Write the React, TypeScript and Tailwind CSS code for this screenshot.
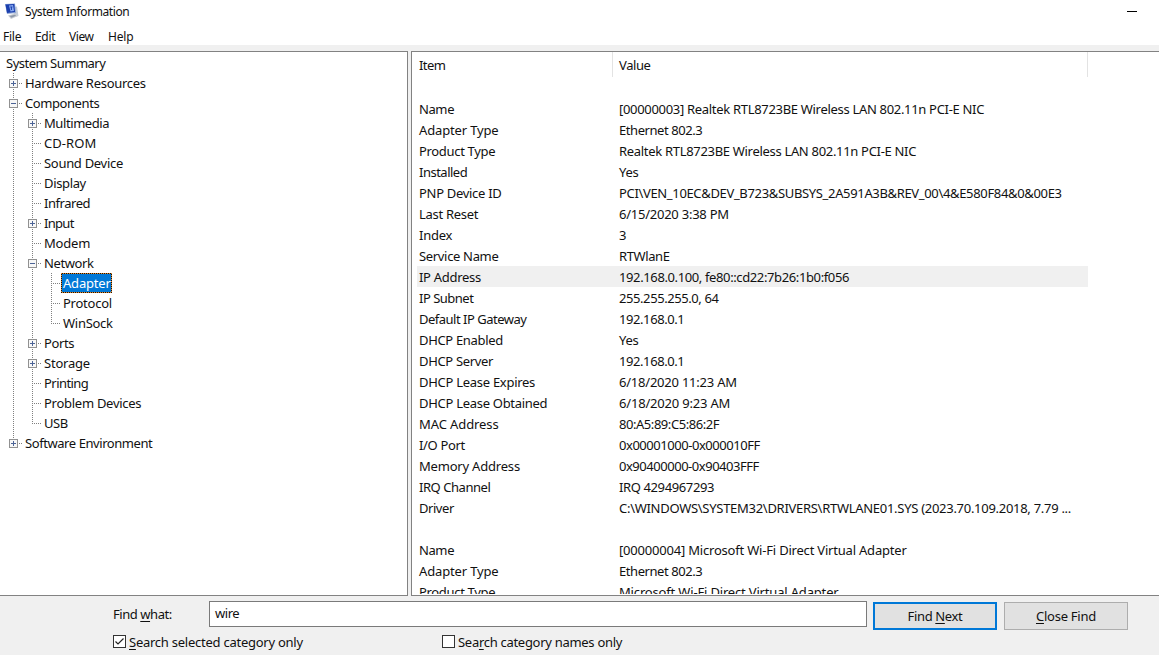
import React from "react";

type Toggle = "plus" | "minus" | "none";
type Guide = "through" | "last";

interface TreeNode {
  label: string;
  guides: Guide[];
  toggle: Toggle;
  track: string;
  selected?: boolean;
}

const T: Guide = "through";
const L: Guide = "last";

const nodes: TreeNode[] = [
  { label: "Hardware Resources", guides: [T], toggle: "plus", track: "tracking-[-0.28px]" },
  { label: "Components", guides: [T], toggle: "minus", track: "tracking-[-0.42px]" },
  { label: "Multimedia", guides: [T, T], toggle: "plus", track: "tracking-[-0.42px]" },
  { label: "CD-ROM", guides: [T, T], toggle: "none", track: "tracking-[0.05px]" },
  { label: "Sound Device", guides: [T, T], toggle: "none", track: "tracking-[-0.3px]" },
  { label: "Display", guides: [T, T], toggle: "none", track: "tracking-[-0.35px]" },
  { label: "Infrared", guides: [T, T], toggle: "none", track: "tracking-[-0.45px]" },
  { label: "Input", guides: [T, T], toggle: "plus", track: "tracking-[-0.7px]" },
  { label: "Modem", guides: [T, T], toggle: "none", track: "tracking-[-0.2px]" },
  { label: "Network", guides: [T, T], toggle: "minus", track: "tracking-[-0.4px]" },
  { label: "Adapter", guides: [T, T, T], toggle: "none", track: "tracking-[-0.2px]", selected: true },
  { label: "Protocol", guides: [T, T, T], toggle: "none", track: "tracking-[-0.25px]" },
  { label: "WinSock", guides: [T, T, L], toggle: "none", track: "tracking-[-0.28px]" },
  { label: "Ports", guides: [T, T], toggle: "plus", track: "tracking-[-0.4px]" },
  { label: "Storage", guides: [T, T], toggle: "plus", track: "tracking-[-0.22px]" },
  { label: "Printing", guides: [T, T], toggle: "none", track: "tracking-[-0.55px]" },
  { label: "Problem Devices", guides: [T, T], toggle: "none", track: "tracking-[-0.27px]" },
  { label: "USB", guides: [T, L], toggle: "none", track: "tracking-[-0.5px]" },
  { label: "Software Environment", guides: [L], toggle: "plus", track: "tracking-[-0.43px]" },
];

interface Row {
  item: string;
  itemTrack: string;
  value: string;
  valueTrack: string;
}

const row = (item: string, itemTrack: string, value: string, valueTrack: string): Row => ({
  item,
  itemTrack,
  value,
  valueTrack,
});

const rows: Row[] = [
  row("", "", "", ""),
  row("Name", "tracking-[-0.4px]", "[00000003] Realtek RTL8723BE Wireless LAN 802.11n PCI-E NIC", "tracking-[-0.31px]"),
  row("Adapter Type", "tracking-[-0.15px]", "Ethernet 802.3", "tracking-[-0.43px]"),
  row("Product Type", "tracking-[-0.33px]", "Realtek RTL8723BE Wireless LAN 802.11n PCI-E NIC", "tracking-[-0.31px]"),
  row("Installed", "tracking-[-0.5px]", "Yes", "tracking-[-0.3px]"),
  row("PNP Device ID", "tracking-[-0.3px]", "PCI\\VEN_10EC&DEV_B723&SUBSYS_2A591A3B&REV_00\\4&E580F84&0&00E3", "tracking-[-0.34px]"),
  row("Last Reset", "tracking-[-0.3px]", "6/15/2020 3:38 PM", "tracking-[-0.24px]"),
  row("Index", "tracking-[-0.25px]", "3", "tracking-normal"),
  row("Service Name", "tracking-[-0.33px]", "RTWlanE", "tracking-[-0.4px]"),
  row("IP Address", "tracking-[-0.3px]", "192.168.0.100, fe80::cd22:7b26:1b0:f056", "tracking-[-0.38px]"),
  row("IP Subnet", "tracking-[-0.5px]", "255.255.255.0, 64", "tracking-[-0.42px]"),
  row("Default IP Gateway", "tracking-[-0.5px]", "192.168.0.1", "tracking-[-0.42px]"),
  row("DHCP Enabled", "tracking-[-0.33px]", "Yes", "tracking-[-0.3px]"),
  row("DHCP Server", "tracking-[-0.33px]", "192.168.0.1", "tracking-[-0.42px]"),
  row("DHCP Lease Expires", "tracking-[-0.28px]", "6/18/2020 11:23 AM", "tracking-[-0.22px]"),
  row("DHCP Lease Obtained", "tracking-[-0.29px]", "6/18/2020 9:23 AM", "tracking-[-0.19px]"),
  row("MAC Address", "tracking-[-0.1px]", "80:A5:89:C5:86:2F", "tracking-[-0.45px]"),
  row("I/O Port", "tracking-[-0.35px]", "0x00001000-0x000010FF", "tracking-[-0.46px]"),
  row("Memory Address", "tracking-[-0.2px]", "0x90400000-0x90403FFF", "tracking-[-0.47px]"),
  row("IRQ Channel", "tracking-[-0.45px]", "IRQ 4294967293", "tracking-[-0.38px]"),
  row("Driver", "tracking-[-0.45px]", "C:\\WINDOWS\\SYSTEM32\\DRIVERS\\RTWLANE01.SYS (2023.70.109.2018, 7.79 ...", "tracking-[-0.285px]"),
  row("", "", "", ""),
  row("Name", "tracking-[-0.4px]", "[00000004] Microsoft Wi-Fi Direct Virtual Adapter", "tracking-[-0.2px]"),
  row("Adapter Type", "tracking-[-0.15px]", "Ethernet 802.3", "tracking-[-0.43px]"),
  row("Product Type", "tracking-[-0.33px]", "Microsoft Wi-Fi Direct Virtual Adapter", "tracking-[-0.17px]"),
];

function GuideCell({ guide, branch, toggle }: { guide: Guide; branch: boolean; toggle: Toggle }) {
  return (
    <svg width="19" height="20" viewBox="0 0 19 20" className="shrink-0" shapeRendering="crispEdges">
      <path d={guide === "last" ? "M9.5 0V11" : "M9.5 0V20"} stroke="#808080" strokeDasharray="1 1" />
      {branch && <path d="M9 10.5H19" stroke="#808080" strokeDasharray="1 1" />}
      {toggle !== "none" && (
        <>
          <rect x="5.5" y="6.5" width="8" height="8" fill="#f7f7f7" stroke="#919191" />
          <path d="M7 10.5H12" stroke="#4b6396" />
          {toggle === "plus" && <path d="M9.5 8V13" stroke="#4b6396" />}
        </>
      )}
    </svg>
  );
}

function TreeRow({ node }: { node: TreeNode }) {
  const end = node.guides.length - 1;
  return (
    <div className="flex h-5">
      {node.guides.map((g, i) => (
        <GuideCell key={i} guide={g} branch={i === end} toggle={i === end ? node.toggle : "none"} />
      ))}
      {node.selected ? (
        <span className="h-5 w-[51px] bg-[repeating-conic-gradient(#1c1208_0_25%,#e08a30_0_50%)] bg-size-[2px_2px] p-px">
          <span className={`block h-[18px] bg-[#0078d7] pl-px leading-[18px] text-white ${node.track}`}>
            {node.label}
          </span>
        </span>
      ) : (
        <span className={`pl-0.5 ${node.track}`}>{node.label}</span>
      )}
    </div>
  );
}

function AppIcon() {
  return (
    <svg width="16" height="17" viewBox="0 0 16 17" className="mt-px">
      <path d="M9 4L13 3.5L14.5 13L10 14Z" fill="#c3ccd8" />
      <path d="M1 1L11 .5L12 10L3 11Z" fill="#8ea6d6" />
      <path d="M1.5 1.5L10.3 1L11 9L3 10Z" fill="#1b3fae" />
      <path d="M5 2.5L9 2L10 8L6.5 8.5Z" fill="#88a9ef" />
      <path d="M6.3 4H8.4M7.4 4V7" stroke="#1b3fae" />
      <path d="M4 12.5L11 10.5L14 13L7 16Z" fill="#c9cdd3" />
      <path d="M5.5 13L11 11.7L12 12.7L7.5 14.8Z" fill="#8e99a9" />
    </svg>
  );
}

export default function App() {
  return (
    <div className="flex h-[655px] w-[1159px] flex-col overflow-hidden bg-[#f0f0f0] font-['Noto_Sans',sans-serif] text-[13px] leading-5 whitespace-pre text-[#111]">
      <header className="flex h-[25px] shrink-0 items-start justify-between bg-white pt-0.5 pr-[22px] pl-1 text-xs leading-5">
        <div className="flex gap-[5px]">
          <AppIcon />
          <span className="tracking-[-0.42px]">System Information</span>
        </div>
        <div className="mt-[9px] h-px w-2.5 bg-black" />
      </header>
      <nav className="flex h-5 shrink-0 bg-white pt-0.5 pl-[3px] text-xs leading-5">
        <span className="w-8 tracking-[-0.25px]">File</span>
        <span className="w-[34px] tracking-[-0.3px]">Edit</span>
        <span className="w-[39px] tracking-[-0.4px]">View</span>
        <span className="tracking-[-0.2px]">Help</span>
      </nav>
      <main className="mt-1.5 flex h-[545px] shrink-0 gap-[3px]">
        <section className="w-[408px] shrink-0 border-y border-r border-[#828282] bg-white pt-px pl-1">
          <div className="h-5 pl-0.5 tracking-[-0.5px]">System Summary</div>
          {nodes.map((n) => (
            <TreeRow key={n.label} node={n} />
          ))}
        </section>
        <section className="min-w-0 flex-1 border-y border-l border-[#828282] bg-white pl-[5px]">
          <div className="h-[542px] overflow-hidden">
            <div className="flex h-[25px] w-[671px] border-r border-[#e3e3e3] pl-0.5 leading-[27px]">
              <div className="w-[194px] border-r border-[#e3e3e3] tracking-[-0.6px]">Item</div>
              <div className="pl-1.5 tracking-[-0.4px]">Value</div>
            </div>
            {rows.map((r, i) => (
              <div
                key={i}
                className={`flex h-[21px] w-[671px] pl-0.5 leading-[23px] ${r.item === "IP Address" ? "bg-[#f0f0f0]" : ""}`}
              >
                <span className={`w-[200px] shrink-0 ${r.itemTrack}`}>{r.item}</span>
                <span className={r.valueTrack}>{r.value}</span>
              </div>
            ))}
          </div>
        </section>
      </main>
      <footer className="flex flex-col">
        <div className="flex h-[35px] items-start pt-[5px] pl-[113px]">
          <label className="mt-[3px] w-24 tracking-[-0.45px]">
            Find <u className="underline-offset-2">w</u>hat:
          </label>
          <div className="h-[26px] w-[658px] border border-[#7a7a7a] bg-white pl-[5px] leading-[23px] tracking-[-0.45px]">wire</div>
          <button className="mt-px ml-1.5 h-7 w-[124px] border-2 border-[#0078d7] bg-[#e1e1e1] leading-6 tracking-[-0.35px]">
            Find <u className="underline-offset-2">N</u>ext
          </button>
          <button className="mt-px ml-[7px] h-7 w-[124px] border border-[#adadad] bg-[#e1e1e1] leading-[26px] tracking-[-0.25px]">
            <u className="underline-offset-2">C</u>lose Find
          </button>
        </div>
        <div className="flex h-6 pt-px pl-[113px]">
          <div className="flex w-[329px] gap-[3px]">
            <svg width="13" height="13" viewBox="0 0 13 13" className="mt-[3px]">
              <rect x=".5" y=".5" width="12" height="12" fill="#fff" stroke="#333" />
              <path d="M2.5 6.5L5 9L10.5 3.5" fill="none" stroke="#222" strokeWidth="1.2" />
            </svg>
            <span className="tracking-[-0.25px]">
              <u className="underline-offset-2">S</u>earch selected category only
            </span>
          </div>
          <div className="flex gap-[3px]">
            <div className="mt-[3px] size-[13px] border border-[#333] bg-white" />
            <span className="tracking-[-0.29px]">
              Sea<u className="underline-offset-2">r</u>ch category names only
            </span>
          </div>
        </div>
      </footer>
    </div>
  );
}
